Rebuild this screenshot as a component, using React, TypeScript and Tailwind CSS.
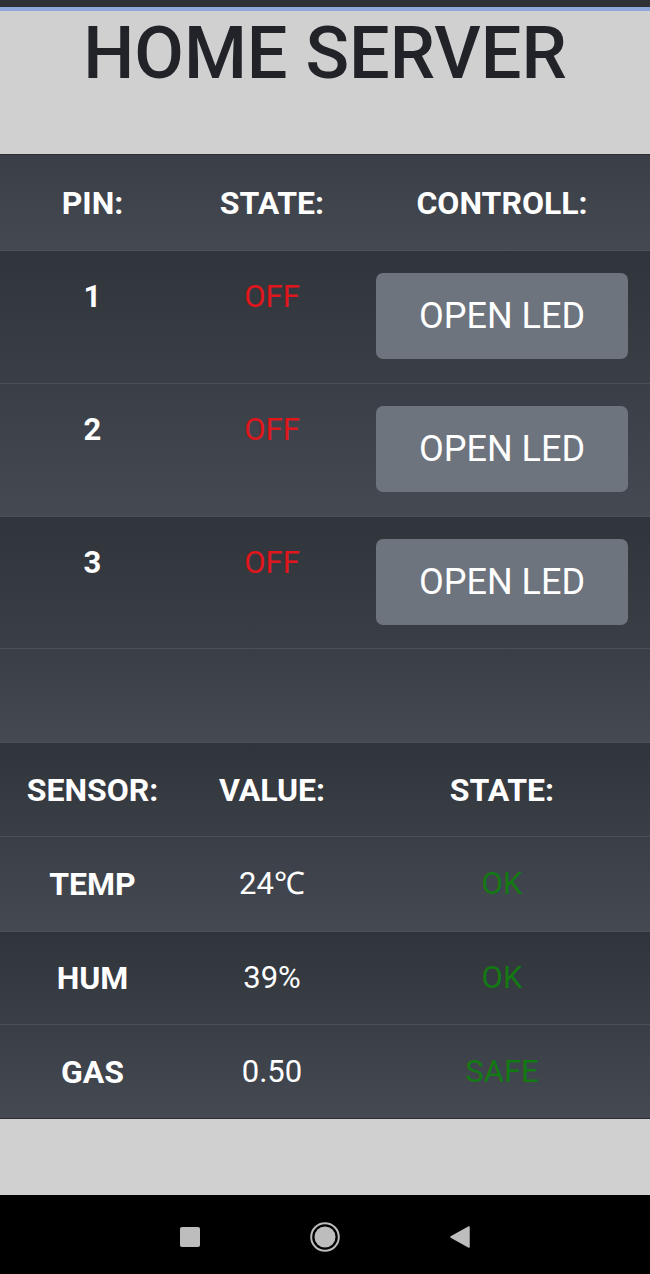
const light = "bg-[linear-gradient(180deg,#3a3e46_0%,#454a52_100%)]";
const dark = "bg-[linear-gradient(180deg,#30343b_0%,#3a3e45_100%)]";

const pins = [
  { pin: "1", bg: dark },
  { pin: "2", bg: light },
  { pin: "3", bg: dark },
];

const sensors = [
  { name: "TEMP", value: "24℃", state: "OK", bg: light, h: "h-[95px]" },
  { name: "HUM", value: "39%", state: "OK", bg: dark, h: "h-[93px]" },
  { name: "GAS", value: "0.50", state: "SAFE", bg: light, h: "h-[94px]" },
];

function Row({
  bg,
  className,
  children,
}: {
  bg: string;
  className: string;
  children?: React.ReactNode;
}) {
  return (
    <div
      className={`grid grid-cols-[185px_174px_286px] border-t border-[#4b5058] ${bg} ${className}`}
    >
      {children}
    </div>
  );
}

export default function App() {
  return (
    <div className="flex h-[1274px] w-[650px] flex-col bg-[#d0d0d0] font-['Roboto',sans-serif] text-white">
      <div className="h-[7px] bg-[#2e3034]" />
      <div className="h-[4px] bg-[#8ea8db]" />
      <div className="h-[144px] border-b border-[#2a2d31] pt-[6px] text-center">
        <h1 className="text-[72px] font-medium leading-[73px] text-[#222328]">
          HOME SERVER
        </h1>
      </div>

      <div className="flex flex-col text-[31px] leading-[36px]">
        {/* pin table */}
        <div
          className={`grid h-[95px] grid-cols-[185px_174px_286px] items-center text-center text-[32px] font-bold ${light}`}
        >
          <span>PIN:</span>
          <span>STATE:</span>
          <span>CONTROLL:</span>
        </div>
        {pins.map((p, i) => (
          <Row key={p.pin} bg={p.bg} className={i === 2 ? "h-[132px]" : "h-[133px]"}>
            <span className="pt-[28px] text-center font-bold">{p.pin}</span>
            <span className="pt-[28px] text-center text-[#e0161c]">OFF</span>
            <div className="flex justify-center pt-[22px]">
              <button className="h-[86px] w-[252px] rounded-[7px] bg-[#6d747e] text-[36px] text-white">
                OPEN LED
              </button>
            </div>
          </Row>
        ))}
        <Row bg={light} className="h-[94px]" />

        {/* sensor table */}
        <Row bg={dark} className="h-[94px] items-center text-center text-[32px] font-bold">
          <span>SENSOR:</span>
          <span>VALUE:</span>
          <span>STATE:</span>
        </Row>
        {sensors.map((s) => (
          <Row key={s.name} bg={s.bg} className={`${s.h} items-center text-center`}>
            <span className="text-[32px] font-bold">{s.name}</span>
            <span>{s.value}</span>
            <span className="text-[#137a13]">{s.state}</span>
          </Row>
        ))}
      </div>

      <div className="h-[77px] border-t border-[#2a2d31] bg-[#d0d0d0]" />

      {/* android nav bar */}
      <div className="flex h-[79px] items-center justify-center gap-[110px] bg-black pt-[4px]">
        <div className="h-[20px] w-[20px] rounded-[2px] bg-[#bdbdbd]" />
        <svg width="30" height="30" viewBox="0 0 30 30">
          <circle cx="15" cy="15" r="13.8" fill="none" stroke="#bdbdbd" strokeWidth="2" />
          <circle cx="15" cy="15" r="10.5" fill="#bdbdbd" />
        </svg>
        <svg width="20" height="22" viewBox="0 0 20 22">
          <path d="M19 1 L1 11 L19 21 Z" fill="#bdbdbd" stroke="#bdbdbd" strokeWidth="1.5" strokeLinejoin="round" />
        </svg>
      </div>
    </div>
  );
}
